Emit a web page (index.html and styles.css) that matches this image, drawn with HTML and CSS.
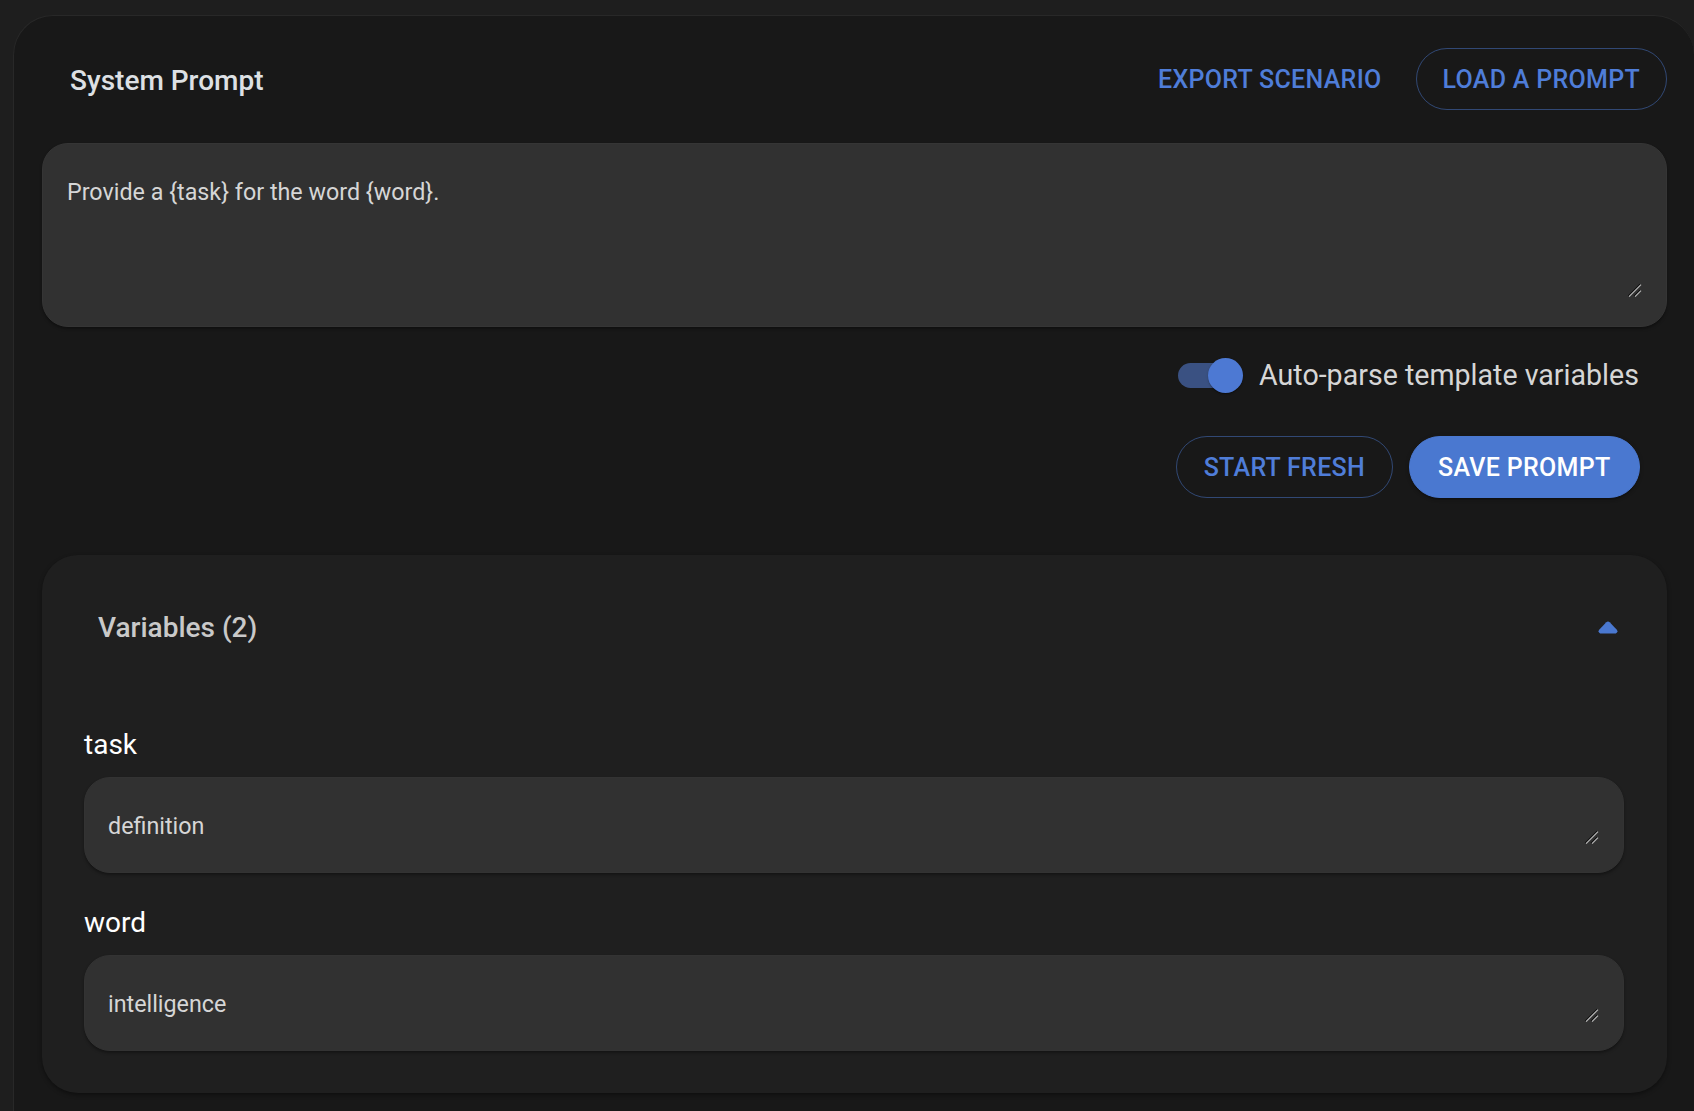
FILE: index.html
```html
<!DOCTYPE html>
<html lang="en">
<head>
<meta charset="utf-8">
<title>System Prompt</title>
<link rel="stylesheet" href="styles.css">
</head>
<body>
<div class="page">
  <section class="card">
    <header class="card-head">
      <h2 class="title">System Prompt</h2>
      <div class="head-actions">
        <button class="btn btn-text">EXPORT SCENARIO</button>
        <button class="btn btn-outline btn-load">LOAD A PROMPT</button>
      </div>
    </header>

    <div class="field field-prompt">
      <textarea class="area area-prompt" spellcheck="false">Provide a {task} for the word {word}.</textarea>
      <svg class="grip" viewBox="0 0 14 14" width="14" height="14" aria-hidden="true">
        <path d="M0.2 13.2 L12.2 1.2 M6.2 13.2 L12.2 7.2" stroke="#0c0c0c" stroke-width="1.4"/>
        <path d="M1 13.6 L13 1.6 M7 13.6 L13 7.6" stroke="#b4b4b4" stroke-width="1.3"/>
      </svg>
    </div>

    <div class="toggle-row">
      <span class="switch"><span class="track"></span><span class="knob"></span></span>
      <span class="toggle-label">Auto-parse template variables</span>
    </div>

    <div class="action-row">
      <button class="btn btn-outline btn-fresh">START FRESH</button>
      <button class="btn btn-contained btn-save">SAVE PROMPT</button>
    </div>

    <section class="vars">
      <div class="vars-head">
        <h3 class="vars-title">Variables (2)</h3>
        <svg class="caret" viewBox="0 0 20 13" width="20" height="13" aria-hidden="true">
          <path d="M8.3 1.2 Q10 -0.3 11.7 1.2 L18.6 8.4 Q20.6 10.8 17.8 12.4 L2.2 12.4 Q-0.6 10.8 1.4 8.4 Z" fill="#4a78d0"/>
        </svg>
      </div>
      <div class="var">
        <label class="var-label">task</label>
        <div class="field field-var">
          <textarea class="area area-var" spellcheck="false">definition</textarea>
          <svg class="grip" viewBox="0 0 14 14" width="14" height="14" aria-hidden="true">
            <path d="M0.2 13.2 L12.2 1.2 M6.2 13.2 L12.2 7.2" stroke="#0c0c0c" stroke-width="1.4"/>
            <path d="M1 13.6 L13 1.6 M7 13.6 L13 7.6" stroke="#b4b4b4" stroke-width="1.3"/>
          </svg>
        </div>
      </div>
      <div class="var">
        <label class="var-label">word</label>
        <div class="field field-var">
          <textarea class="area area-var" spellcheck="false">intelligence</textarea>
          <svg class="grip" viewBox="0 0 14 14" width="14" height="14" aria-hidden="true">
            <path d="M0.2 13.2 L12.2 1.2 M6.2 13.2 L12.2 7.2" stroke="#0c0c0c" stroke-width="1.4"/>
            <path d="M1 13.6 L13 1.6 M7 13.6 L13 7.6" stroke="#b4b4b4" stroke-width="1.3"/>
          </svg>
        </div>
      </div>
    </section>
  </section>
</div>
</body>
</html>
```

FILE: styles.css
```css
* { box-sizing: border-box; }
html, body {
  margin: 0;
  padding: 0;
  background: #1e1e1e;
  overflow: hidden;
  color-scheme: dark;
}
body {
  font-family: Roboto, "Liberation Sans", Arial, sans-serif;
  width: 1694px;
  height: 1111px;
}
.page {
  padding: 15px 0 0 13px;
}
.card {
  width: 1681px;
  min-height: 1120px;
  background: #181818;
  border: 1px solid #282828;
  border-right: none;
  border-radius: 40px 40px 0 0;
  padding: 29px 27px 0 28px;
}
.card-head {
  display: flex;
  align-items: center;
  justify-content: space-between;
  height: 62px;
  margin-top: 3px;
}
.title {
  margin: 3px 0 0 28px;
  font-size: 28px;
  font-weight: 500;
  color: #dde0e4;
  letter-spacing: 0;
}
.head-actions {
  display: flex;
  align-items: center;
  gap: 7px;
}
.btn {
  font-family: Roboto, "Liberation Sans", Arial, sans-serif;
  font-size: 25px;
  font-weight: 500;
  letter-spacing: 0.3px;
  border-radius: 999px;
  height: 62px;
  cursor: pointer;
  background: transparent;
  color: #4f7dd8;
  border: 1px solid transparent;
  padding: 0 26px;
  line-height: 1;
}
.btn-fresh {
  padding: 0 26.5px;
}
.btn-save {
  padding: 0 28.5px;
}
.btn-outline {
  border-color: rgba(74, 120, 208, 0.5);
}
.btn-contained {
  background: #4a78d0;
  color: #ffffff;
  border-color: #4a78d0;
  box-shadow: 0 3px 1px -2px rgba(0,0,0,0.2), 0 2px 2px 0 rgba(0,0,0,0.14), 0 1px 5px 0 rgba(0,0,0,0.12);
}
.field {
  position: relative;
  background: #313131;
  border: 1px solid #353535;
  box-shadow: 0 2px 3px rgba(0,0,0,0.35);
}
.grip {
  position: absolute;
  display: block;
}
.field-prompt {
  margin-top: 33px;
  height: 184px;
  border-radius: 26px;
  padding: 28px 24px 28px 24px;
}
.field-prompt .grip {
  right: 24px;
  bottom: 29px;
}
.area {
  display: block;
  width: 100%;
  background: transparent;
  border: none;
  outline: none;
  color: #d6d6d6;
  font-family: Roboto, "Liberation Sans", Arial, sans-serif;
  padding: 0;
  margin: 0;
  resize: none;
  overflow: hidden;
}
.area-prompt {
  font-size: 23.3px;
  height: 126px;
  line-height: 40px;
}
.toggle-row {
  display: flex;
  align-items: center;
  justify-content: flex-end;
  gap: 16px;
  height: 60px;
  margin-top: 18px;
  padding-right: 28px;
}
.switch {
  position: relative;
  width: 65px;
  height: 35px;
  display: inline-block;
}
.track {
  position: absolute;
  left: 0;
  top: 5px;
  width: 58px;
  height: 25px;
  border-radius: 13px;
  background: #3a5182;
}
.knob {
  position: absolute;
  left: 30px;
  top: 0;
  width: 35px;
  height: 35px;
  border-radius: 50%;
  background: #4d79d3;
  box-shadow: 0 2px 1px -1px rgba(0,0,0,0.2), 0 1px 1px 0 rgba(0,0,0,0.14), 0 1px 3px 0 rgba(0,0,0,0.12);
}
.toggle-label {
  font-size: 28.6px;
  color: #d6d6d6;
}
.action-row {
  display: flex;
  justify-content: flex-end;
  gap: 16px;
  margin-top: 31px;
  padding-right: 27px;
}
.vars {
  margin-top: 57px;
  width: 1625px;
  height: 538px;
  background: #1f1f1f;
  border-radius: 36px;
  padding: 52px 43px 0 42px;
  box-shadow: 0 2px 4px rgba(0,0,0,0.4);
}
.vars-head {
  display: flex;
  align-items: center;
  justify-content: space-between;
  padding: 0 6px 0 14px;
  height: 40px;
}
.vars-title {
  margin: 0;
  font-size: 28px;
  font-weight: 500;
  color: #c9c9c9;
}
.caret {
  display: block;
}
.vars-head + .var {
  margin-top: 81px;
}
.var + .var {
  margin-top: 33px;
}
.var-label {
  display: block;
  font-size: 28px;
  color: #ffffff;
  line-height: 34px;
  margin-bottom: 15px;
}
.field-var {
  height: 96px;
  border-radius: 26px;
  padding: 28px 24px 28px 23px;
  border-color: #333333;
}
.field-var .grip {
  right: 24px;
  bottom: 28px;
}
.area-var {
  font-size: 23.3px;
  height: 40px;
  line-height: 40px;
}
```
